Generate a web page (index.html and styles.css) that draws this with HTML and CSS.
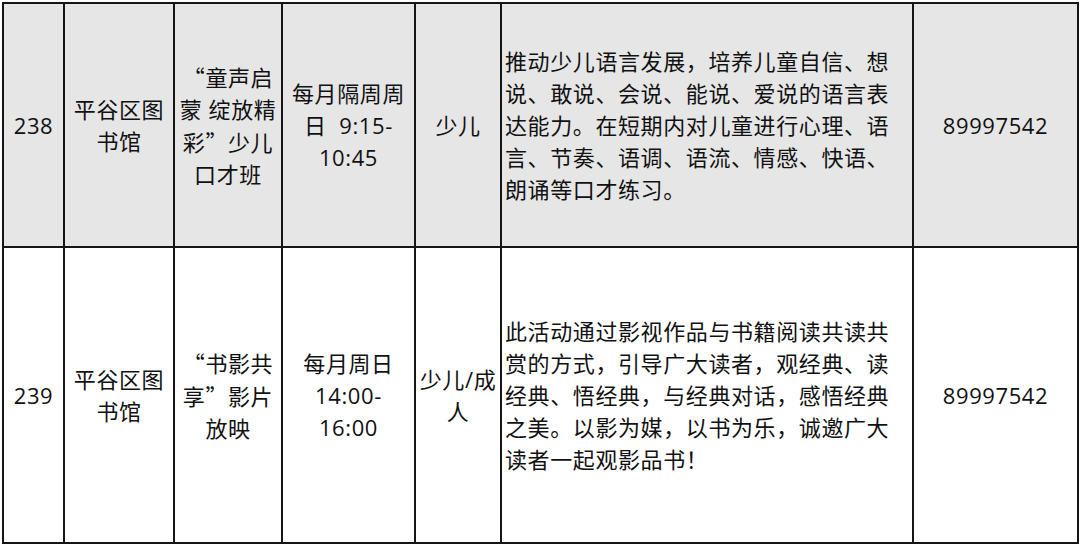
FILE: index.html
```
<!DOCTYPE html>
<html lang="zh-CN">
<head>
<meta charset="utf-8">
<title>活动表</title>
<link rel="stylesheet" href="styles.css">
</head>
<body>
<table class="grid">
  <colgroup>
    <col class="c-no">
    <col class="c-lib">
    <col class="c-name">
    <col class="c-time">
    <col class="c-aud">
    <col class="c-desc">
    <col class="c-tel">
  </colgroup>
  <tbody>
    <tr class="row row-a">
      <td class="cell">238</td>
      <td class="cell">平谷区图<br>书馆</td>
      <td class="cell"><span class="q">“</span>童声启<br>蒙 绽放精<br>彩<span class="q">”</span>少儿<br>口才班</td>
      <td class="cell">每月隔周周<br>日&nbsp; 9:15-<br>10:45</td>
      <td class="cell">少儿</td>
      <td class="cell desc">推动少儿语言发展，培养儿童自信、想说、敢说、会说、能说、爱说的语言表达能力。在短期内对儿童进行心理、语言、节奏、语调、语流、情感、快语、朗诵等口才练习。</td>
      <td class="cell">89997542</td>
    </tr>
    <tr class="row row-b">
      <td class="cell">239</td>
      <td class="cell">平谷区图<br>书馆</td>
      <td class="cell"><span class="q">“</span>书影共<br>享<span class="q">”</span>影片<br>放映</td>
      <td class="cell">每月周日<br>14:00-<br>16:00</td>
      <td class="cell">少儿/成<br>人</td>
      <td class="cell desc">此活动通过影视作品与书籍阅读共读共赏的方式，引导广大读者，观经典、读经典、悟经典，与经典对话，感悟经典之美。以影为媒，以书为乐，诚邀广大读者一起观影品书！</td>
      <td class="cell">89997542</td>
    </tr>
  </tbody>
</table>
</body>
</html>
```
FILE: styles.css
```
html, body {
  margin: 0;
  padding: 0;
  background: #ffffff;
}

body {
  padding: 2px 0 0 2px;
}

.grid {
  border-collapse: collapse;
  table-layout: fixed;
  width: 1075px;
  font-family: "Open Sans", "Noto Sans CJK SC", sans-serif;
  font-size: 22px;
  letter-spacing: 0.6px;
  line-height: 32px;
  color: #111111;
}

.c-no { width: 61px; }
.c-lib { width: 110px; }
.c-name { width: 108px; }
.c-time { width: 133px; }
.c-aud { width: 86px; }
.c-desc { width: 412px; }
.c-tel { width: 165px; }

.row-a {
  height: 244px;
  background: #e6e6e6;
}

.row-b {
  height: 296px;
  background: #ffffff;
}

.cell {
  border: 2px solid #151515;
  padding: 0;
  text-align: center;
  vertical-align: middle;
  overflow: hidden;
}

.cell.desc {
  text-align: left;
  padding: 0 16px 0 3px;
}

.q {
  font-family: "Noto Sans CJK SC", sans-serif;
}
```
